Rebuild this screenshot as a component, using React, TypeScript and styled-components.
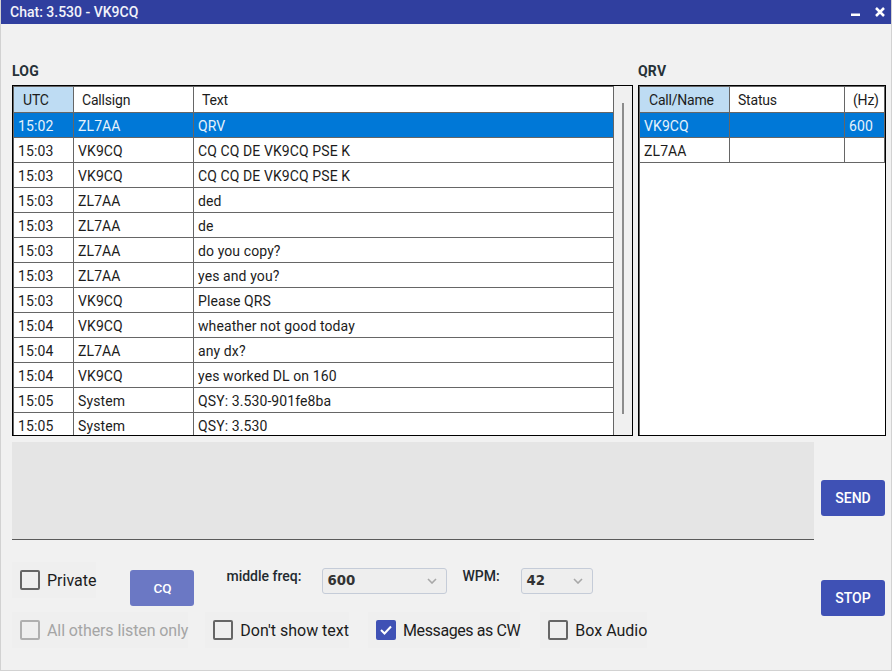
import React from "react";
import styled, { createGlobalStyle } from "styled-components";

const Global = createGlobalStyle`
  html, body { margin: 0; padding: 0; background: #f1f1f1; }
  body { font-family: Roboto, "Liberation Sans", sans-serif; color: #1c1c1c; }
`;

const Window = styled.div`
  width: 892px; height: 671px; box-sizing: border-box; display: flex; flex-direction: column;
  background: #f1f1f1; border: 1px solid #d2d2d2; border-top: none; overflow: hidden;
`;
const TitleBar = styled.div`
  height: 24px; margin: 0 -1px; flex: none; background: #303f9f; color: #f2f3fa; display: flex; align-items: center;
  padding: 0 7px 0 10px; font-size: 14px; font-weight: 500; justify-content: space-between;
`;
const TitleIcons = styled.div`display: flex; align-items: center; gap: 14px;`;
const Content = styled.div`flex: 1; display: flex; flex-direction: column; padding: 40px 5px 0 11px;`;
const Tables = styled.div`display: flex; gap: 5px;`;
const Panel = styled.section<{ $w: number }>`width: ${p => p.$w}px; display: flex; flex-direction: column;`;
const PanelLabel = styled.div`height: 21px; font-size: 14px; font-weight: 700; letter-spacing: 0.2px; color: #263238; line-height: 15px;`;
const Frame = styled.div`height: 351px; box-sizing: border-box; border: 1px solid #000; background: #fff; display: flex; overflow: hidden;`;
const Grid = styled.div`flex: 1; min-width: 0; display: flex; flex-direction: column; border: solid #666; border-width: 1px 0 0 1px;`;
const Row = styled.div<{ $sel?: boolean; $head?: boolean }>`
  display: flex; flex: none; height: ${p => (p.$head ? 26 : 25)}px; box-sizing: border-box; border-bottom: 1px solid #666;
  background: ${p => (p.$sel ? "#0078d7" : "#fff")}; color: ${p => (p.$sel ? "#e6f2fb" : "#1c1c1c")};
`;
const Cell = styled.div<{ $w?: number; $active?: boolean }>`
  ${p => (p.$w ? `width: ${p.$w}px; flex: none;` : "flex: 1;")}
  box-sizing: border-box; font-size: 14px; letter-spacing: 0.1px; line-height: 26px; white-space: nowrap; overflow: hidden;
  border-right: 1px solid #666; padding-left: 4px;
  background: ${p => (p.$active ? "#bedcf3" : "transparent")};
`;
const HeadCell = styled(Cell)`
  letter-spacing: -0.2px; padding-left: 8px;
  &:first-child { padding-left: 9px; }
`;
const Track = styled.div`width: 18px; flex: none; background: #f0f0f0; display: flex; justify-content: center; padding-top: 17px; box-sizing: border-box;`;
const Thumb = styled.div`width: 2px; height: 311px; background: #8c8c8c;`;
const Middle = styled.div`display: flex; gap: 7px; margin-top: 6px;`;
const Input = styled.div`width: 802px; height: 98px; box-sizing: border-box; background: #e5e5e5; border-bottom: 1px solid #5a5a5a;`;
const Button = styled.button<{ $soft?: boolean }>`
  width: 64px; height: 36px; padding: 0; border: none; border-radius: 3px; flex: none;
  background: ${p => (p.$soft ? "#6b78c4" : "#3f51b5")}; color: #fff;
  font: 500 ${p => (p.$soft ? 13.5 : 14)}px Roboto, sans-serif;
`;
const SendSlot = styled.div`padding-top: 38px;`;
const Footer = styled.div`display: flex; justify-content: space-between;`;
const Controls = styled.div`display: flex; flex-direction: column; gap: 6px; padding-top: 22px;`;
const ControlRow = styled.div`display: flex; align-items: flex-start;`;
const CheckLabel = styled.label<{ $off?: boolean; $ml?: number; $ls?: number }>`
  display: flex; align-items: center; gap: 7px; height: 36px; padding: 0 0 0 8px;
  margin-left: ${p => p.$ml ?? 0}px; background: #efefef; font-size: 16px; letter-spacing: ${p => p.$ls ?? 0}px;
  color: ${p => (p.$off ? "#a5a5a5" : "#1c1c1c")};
`;
const Box = styled.span<{ $on?: boolean; $off?: boolean }>`
  width: 20px; height: 20px; box-sizing: border-box; border-radius: 2px; display: flex; align-items: center; justify-content: center;
  border: 2px solid ${p => (p.$on ? "#3f51b5" : p.$off ? "#b0b0b0" : "#666")}; background: ${p => (p.$on ? "#3f51b5" : "transparent")};
`;
const CQSlot = styled.div`margin: 8px 0 0 34px;`;
const FieldLabel = styled.div<{ $w: number; $ml: number }>`
  width: ${p => p.$w}px; margin: 6px 0 0 ${p => p.$ml}px; font-size: 14px; font-weight: 500; line-height: 16px; color: #1f2a30;
`;
const Select = styled.div<{ $w: number }>`
  width: ${p => p.$w}px; height: 26px; margin-top: 6px; box-sizing: border-box; border: 1px solid #c5ccd8; border-radius: 3px;
  display: flex; align-items: center; justify-content: space-between; padding: 0 9px 1px 4px;
  background: #eeeeee; font: 700 13.33px "DejaVu Sans", sans-serif; color: #333;
`;
const StopSlot = styled.div`padding: 40px 1px 0 0;`;

const log: [string, string, string][] = [
  ["15:03", "VK9CQ", "CQ CQ DE VK9CQ PSE K"],
  ["15:03", "VK9CQ", "CQ CQ DE VK9CQ PSE K"],
  ["15:03", "ZL7AA", "ded"],
  ["15:03", "ZL7AA", "de"],
  ["15:03", "ZL7AA", "do you copy?"],
  ["15:03", "ZL7AA", "yes and you?"],
  ["15:03", "VK9CQ", "Please QRS"],
  ["15:04", "VK9CQ", "wheather not good today"],
  ["15:04", "ZL7AA", "any dx?"],
  ["15:04", "VK9CQ", "yes worked DL on 160"],
  ["15:05", "System", "QSY: 3.530-901fe8ba"],
  ["15:05", "System", "QSY: 3.530"],
];

const Chevron = () => (
  <svg width="10" height="6" viewBox="0 0 10 6" fill="none" stroke="#a8a8a8" strokeWidth="1.6" style={{ marginTop: 1 }}><path d="M1 1l4 4 4-4" /></svg>
);

const Check = ({ label, on, off, ml, ls }: { label: string; on?: boolean; off?: boolean; ml?: number; ls?: number }) => (
  <CheckLabel $off={off} $ml={ml} $ls={ls}>
    <Box $on={on} $off={off}>
      {on && <svg width="14" height="12" viewBox="0 0 14 12" fill="none" stroke="#fff" strokeWidth="2"><path d="M2 6l3.5 3.5L12 2.5" /></svg>}
    </Box>
    {label}
  </CheckLabel>
);

export default function App() {
  return (
    <Window>
      <Global />
      <TitleBar>
        <span>Chat: 3.530 - VK9CQ</span>
        <TitleIcons>
          <svg width="10" height="10" viewBox="0 0 10 10"><rect x="0" y="6.5" width="9" height="2.5" fill="#fff" /></svg>
          <svg width="10" height="10" viewBox="0 0 10 10" stroke="#fff" strokeWidth="2.5"><path d="M1 1l8 8M9 1l-8 8" /></svg>
        </TitleIcons>
      </TitleBar>
      <Content>
        <Tables>
          <Panel $w={621}>
            <PanelLabel>LOG</PanelLabel>
            <Frame>
              <Grid>
                <Row $head>
                  <HeadCell $w={60} $active>UTC</HeadCell>
                  <HeadCell $w={120}>Callsign</HeadCell>
                  <HeadCell>Text</HeadCell>
                </Row>
                <Row $sel>
                  <Cell $w={60}>15:02</Cell>
                  <Cell $w={120}>ZL7AA</Cell>
                  <Cell>QRV</Cell>
                </Row>
                {log.map((r, i) => (
                  <Row key={i}>
                    <Cell $w={60}>{r[0]}</Cell>
                    <Cell $w={120}>{r[1]}</Cell>
                    <Cell>{r[2]}</Cell>
                  </Row>
                ))}
              </Grid>
              <Track><Thumb /></Track>
            </Frame>
          </Panel>
          <Panel $w={248}>
            <PanelLabel>QRV</PanelLabel>
            <Frame>
              <Grid>
                <Row $head>
                  <HeadCell $w={90} $active>Call/Name</HeadCell>
                  <HeadCell $w={115}>Status</HeadCell>
                  <HeadCell>(Hz)</HeadCell>
                </Row>
                <Row $sel>
                  <Cell $w={90}>VK9CQ</Cell>
                  <Cell $w={115} />
                  <Cell>600</Cell>
                </Row>
                <Row>
                  <Cell $w={90}>ZL7AA</Cell>
                  <Cell $w={115} />
                  <Cell />
                </Row>
              </Grid>
            </Frame>
          </Panel>
        </Tables>
        <Middle>
          <Input />
          <SendSlot><Button>SEND</Button></SendSlot>
        </Middle>
        <Footer>
          <Controls>
            <ControlRow>
              <Check label="Private" />
              <CQSlot><Button $soft>CQ</Button></CQSlot>
              <FieldLabel $w={96} $ml={32}>middle freq:</FieldLabel>
              <Select $w={125}>600<Chevron /></Select>
              <FieldLabel $w={59} $ml={15}>WPM:</FieldLabel>
              <Select $w={72}>42<Chevron /></Select>
            </ControlRow>
            <ControlRow>
              <Check label="All others listen only" off ls={-0.1} />
              <Check label="Don't show text" ml={17} />
              <Check label="Messages as CW" on ml={19} ls={-0.4} />
              <Check label="Box Audio" ml={20} />
            </ControlRow>
          </Controls>
          <StopSlot><Button>STOP</Button></StopSlot>
        </Footer>
      </Content>
    </Window>
  );
}
